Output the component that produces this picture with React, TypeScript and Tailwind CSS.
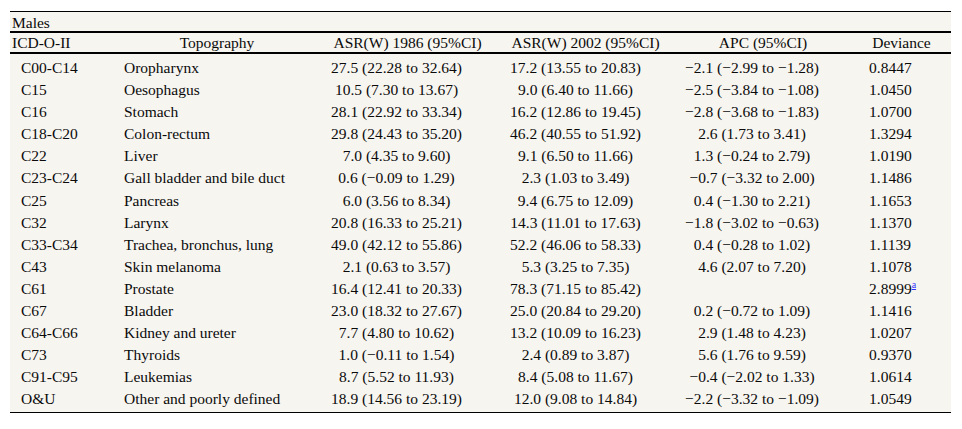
import React from "react";

type Row = [string, string, string, string, string, string, boolean?];

const rows: Row[] = [
  ["C00-C14", "Oropharynx", "27.5 (22.28 to 32.64)", "17.2 (13.55 to 20.83)", "−2.1 (−2.99 to −1.28)", "0.8447"],
  ["C15", "Oesophagus", "10.5 (7.30 to 13.67)", "9.0 (6.40 to 11.66)", "−2.5 (−3.84 to −1.08)", "1.0450"],
  ["C16", "Stomach", "28.1 (22.92 to 33.34)", "16.2 (12.86 to 19.45)", "−2.8 (−3.68 to −1.83)", "1.0700"],
  ["C18-C20", "Colon-rectum", "29.8 (24.43 to 35.20)", "46.2 (40.55 to 51.92)", "2.6 (1.73 to 3.41)", "1.3294"],
  ["C22", "Liver", "7.0 (4.35 to 9.60)", "9.1 (6.50 to 11.66)", "1.3 (−0.24 to 2.79)", "1.0190"],
  ["C23-C24", "Gall bladder and bile duct", "0.6 (−0.09 to 1.29)", "2.3 (1.03 to 3.49)", "−0.7 (−3.32 to 2.00)", "1.1486"],
  ["C25", "Pancreas", "6.0 (3.56 to 8.34)", "9.4 (6.75 to 12.09)", "0.4 (−1.30 to 2.21)", "1.1653"],
  ["C32", "Larynx", "20.8 (16.33 to 25.21)", "14.3 (11.01 to 17.63)", "−1.8 (−3.02 to −0.63)", "1.1370"],
  ["C33-C34", "Trachea, bronchus, lung", "49.0 (42.12 to 55.86)", "52.2 (46.06 to 58.33)", "0.4 (−0.28 to 1.02)", "1.1139"],
  ["C43", "Skin melanoma", "2.1 (0.63 to 3.57)", "5.3 (3.25 to 7.35)", "4.6 (2.07 to 7.20)", "1.1078"],
  ["C61", "Prostate", "16.4 (12.41 to 20.33)", "78.3 (71.15 to 85.42)", "", "2.8999", true],
  ["C67", "Bladder", "23.0 (18.32 to 27.67)", "25.0 (20.84 to 29.20)", "0.2 (−0.72 to 1.09)", "1.1416"],
  ["C64-C66", "Kidney and ureter", "7.7 (4.80 to 10.62)", "13.2 (10.09 to 16.23)", "2.9 (1.48 to 4.23)", "1.0207"],
  ["C73", "Thyroids", "1.0 (−0.11 to 1.54)", "2.4 (0.89 to 3.87)", "5.6 (1.76 to 9.59)", "0.9370"],
  ["C91-C95", "Leukemias", "8.7 (5.52 to 11.93)", "8.4 (5.08 to 11.67)", "−0.4 (−2.02 to 1.33)", "1.0614"],
  ["O&U", "Other and poorly defined", "18.9 (14.56 to 23.19)", "12.0 (9.08 to 14.84)", "−2.2 (−3.32 to −1.09)", "1.0549"],
];

const grid = "grid grid-cols-[106px_202px_179px_177px_178px_99px]";

export default function App() {
  return (
    <div className="bg-white w-[962px] h-[429px] pt-[11px] pl-[10px]" style={{ fontFamily: '"Liberation Serif", "Times New Roman", serif' }}>
      <div className="w-[941px] bg-[#f7f5f0] text-[15.5px] text-[#0a0a0a] border-t border-b border-black">
        <div className="h-[21px] leading-[22px] pl-[2px] border-b-2 border-black">Males</div>
        <div className={`${grid} h-[21px] leading-[20px] border-b-2 border-black`}>
          <div className="pl-[2px]">ICD-O-II</div>
          <div className="text-center">Topography</div>
          <div className="text-center">ASR(W) 1986 (95%CI)</div>
          <div className="text-center">ASR(W) 2002 (95%CI)</div>
          <div className="text-center">APC (95%CI)</div>
          <div className="text-center">Deviance</div>
        </div>
        <div className="pt-[2px] pb-[2.4px]">
          {rows.map((r) => (
            <div key={r[0]} className={`${grid} h-[22.1px] leading-[23px]`}>
              <div className="pl-[11px]">{r[0]}</div>
              <div className="pl-[8px]">{r[1]}</div>
              <div className="text-center pr-[22px]">{r[2]}</div>
              <div className="text-center pr-[20px]">{r[3]}</div>
              <div className="text-center pr-[22px]">{r[4]}</div>
              <div className="pl-[17px]">
                {r[5]}
                <span className="relative -top-[6px] text-[10px] leading-none text-[#3333ff] underline">
                  {r[6] ? "a" : ""}
                </span>
              </div>
            </div>
          ))}
        </div>
      </div>
    </div>
  );
}
